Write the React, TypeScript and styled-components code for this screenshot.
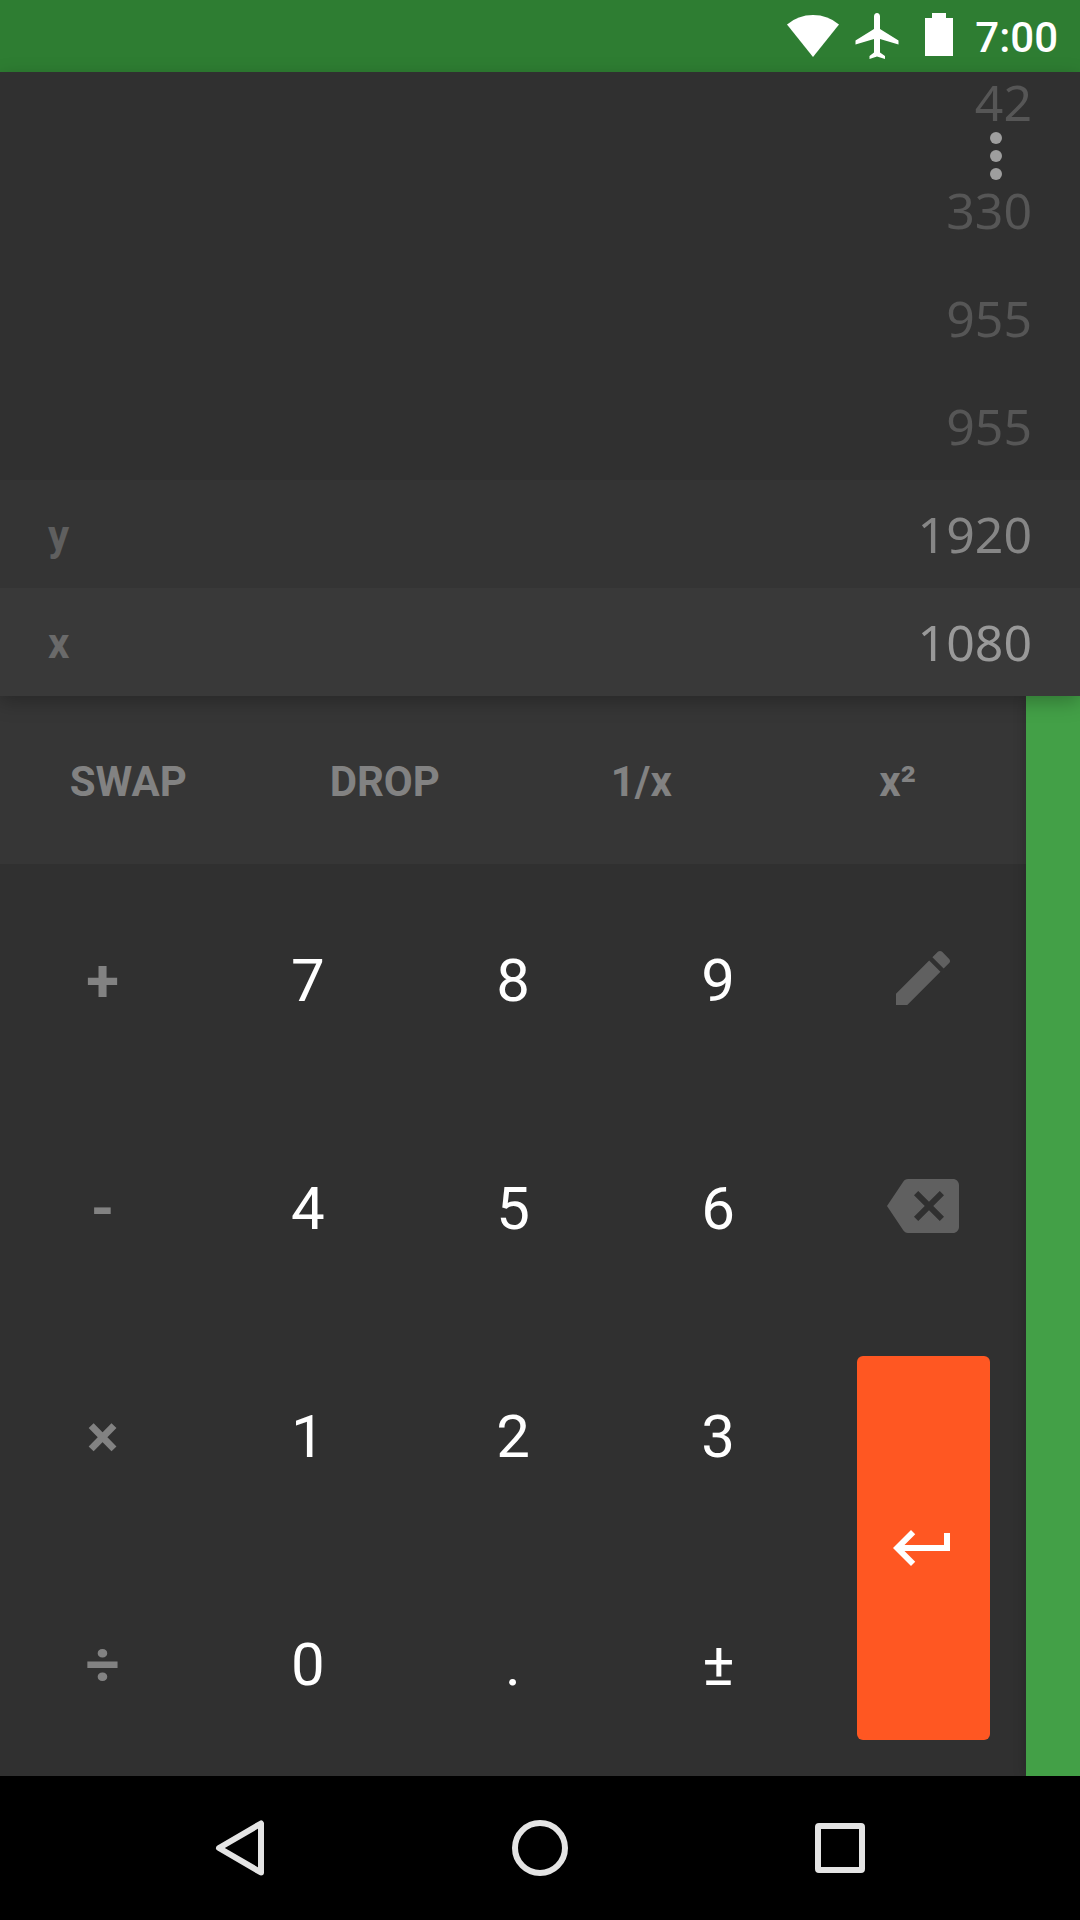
import React from "react";
import styled, { createGlobalStyle } from "styled-components";

const GlobalStyle = createGlobalStyle`
  *, *::before, *::after { box-sizing: border-box; }
  body { margin: 0; background: #303030; }
  button { margin: 0; padding: 0; border: 0; background: none; color: inherit; font: inherit; cursor: pointer; }
`;

const Screen = styled.div`
  display: flex;
  flex-direction: column;
  min-height: 100vh;
  font-family: Roboto, "Noto Sans", sans-serif;
  color: #ffffff;
  background: #303030;
`;

const StatusBar = styled.header`
  display: flex;
  align-items: center;
  justify-content: flex-end;
  height: 72px;
  padding-right: 22px;
  background: #2e7d32;
`;

const StatusIcons = styled.div`
  display: flex;
  gap: 16px;
  margin-right: 12px;
`;

const StatusIcon = styled.svg<{ $width: number }>`
  width: ${(p) => p.$width}px;
  height: 48px;
  fill: #ffffff;
`;

const Clock = styled.time`
  padding-top: 4px;
  font-size: 42px;
  font-weight: 500;
  line-height: 48px;
`;

const Display = styled.section`
  position: relative;
  z-index: 2;
  display: flex;
  flex: 26 1 0;
  background: #303030;
  box-shadow: 0 6px 18px rgba(0, 0, 0, 0.26);
`;

const Stack = styled.dl`
  display: flex;
  flex: 1;
  flex-direction: column;
  margin: 0;
`;

const StackRow = styled.div<{ $background: string }>`
  display: flex;
  flex: none;
  align-items: flex-end;
  justify-content: space-between;
  height: 108px;
  padding: 0 48px 24px;
  background: ${(p) => p.$background};

  &:first-child {
    flex: 1;
    height: auto;
  }
`;

const Register = styled.dt<{ $color: string }>`
  padding-top: 4px;
  font-size: 42px;
  font-weight: 700;
  line-height: 56px;
  color: ${(p) => p.$color};
`;

const Value = styled.dd<{ $color: string }>`
  margin: 0;
  font-family: "Noto Sans", "Open Sans", sans-serif;
  font-size: 50px;
  line-height: 60px;
  color: ${(p) => p.$color};
`;

const MenuButton = styled.button`
  && {
    position: absolute;
    top: 48px;
    right: 48px;
    display: grid;
    color: #9e9e9e;
  }
`;

const Icon = styled.svg`
  display: block;
  width: 72px;
  height: 72px;
  fill: currentColor;
`;

const Body = styled.main`
  display: flex;
  flex: 45 1 0;
`;

const Pad = styled.div`
  display: flex;
  flex: 1;
  flex-direction: column;
`;

const Commands = styled.div`
  display: grid;
  grid-template-columns: repeat(4, 1fr);
  height: 168px;
  background: #363636;
`;

const Command = styled.button`
  && {
    padding-top: 4px;
    font-size: 42px;
    font-weight: 700;
    line-height: 48px;
    color: #828282;
  }
`;

const Keys = styled.div`
  display: grid;
  flex: 1;
  grid-template-columns: repeat(5, 1fr);
  grid-template-rows: repeat(4, 1fr);
`;

const Key = styled.button<{ $operator?: boolean }>`
  && {
    padding-top: 6px;
    font-size: 60px;
    font-weight: ${(p) => (p.$operator ? 700 : 400)};
    line-height: 72px;
    color: ${(p) => (p.$operator ? "#828282" : "#ffffff")};
  }
`;

const IconKey = styled.button`
  && {
    display: grid;
    place-items: center;
    color: #606060;
  }
`;

const EnterKey = styled.button`
  && {
    display: grid;
    grid-row: 3 / span 2;
    grid-column: 5;
    place-items: center;
    margin: 36px;
    border-radius: 6px;
    background: #ff5722;
    color: #ffffff;
  }
`;

const Drawer = styled.aside`
  z-index: 1;
  width: 54px;
  background: #43a047;
  box-shadow: 0 0 12px rgba(0, 0, 0, 0.22);
`;

const NavBar = styled.nav`
  z-index: 3;
  display: grid;
  grid-template-columns: repeat(3, 300px);
  justify-content: center;
  height: 144px;
  background: #000000;
`;

const NavButton = styled.button`
  && {
    display: grid;
    place-items: center;
  }
`;

const NavIcon = styled.svg`
  display: block;
  width: 72px;
  height: 72px;
  fill: none;
  stroke: #e4e4e4;
  stroke-width: 6;
  stroke-linejoin: round;
`;

type Entry = { value: string; color: string; register?: string; registerColor?: string; background: string };

const stack: Entry[] = [
  { value: "42", color: "#565656", background: "#303030" },
  { value: "330", color: "#565656", background: "#303030" },
  { value: "955", color: "#565656", background: "#303030" },
  { value: "955", color: "#565656", background: "#303030" },
  { value: "1920", color: "#868686", register: "y", registerColor: "#5f5f5f", background: "#343434" },
  { value: "1080", color: "#999999", register: "x", registerColor: "#6a6a6a", background: "#393939" },
];

const commands = ["SWAP", "DROP", "1/x", "x²"];

function TextKeys({ labels }: { labels: string[] }) {
  return (
    <>
      {labels.map((label, i) => (
        <Key key={label} type="button" $operator={i === 0}>
          {label}
        </Key>
      ))}
    </>
  );
}

export default function App() {
  return (
    <Screen>
      <GlobalStyle />
      <StatusBar>
        <StatusIcons>
          <StatusIcon $width={52} viewBox="0 0 52 48" aria-label="Wi-Fi">
            <path d="M0 12.500Q11 3 26 3T52 12.500L26 45Z" />
          </StatusIcon>
          <StatusIcon $width={44} viewBox="0 0 44 48" aria-label="Airplane mode">
            <path d="M22 1c1.800 0 3 1.500 3 3.500V17L43.500 28.500V32.500L25 27V40.500L30 44V47L22 44.500L14.500 47V44L19 40.500V27L.5 32.500V28.500L19 17V4.500C19 2.500 20.200 1 22 1Z" />
          </StatusIcon>
          <StatusIcon $width={48} viewBox="0 0 48 48" aria-label="Battery full">
            <path d="M17 1h14v5h7v38H10V6h7Z" />
          </StatusIcon>
        </StatusIcons>
        <Clock>7:00</Clock>
      </StatusBar>

      <Display>
        <Stack>
          {stack.map((entry, i) => (
            <StackRow key={i} $background={entry.background}>
              <Register $color={entry.registerColor ?? "#565656"}>{entry.register}</Register>
              <Value $color={entry.color}>{entry.value}</Value>
            </StackRow>
          ))}
        </Stack>
        <MenuButton type="button" aria-label="More options">
          <Icon viewBox="0 0 24 24">
            <circle cx="12" cy="6" r="2" />
            <circle cx="12" cy="12" r="2" />
            <circle cx="12" cy="18" r="2" />
          </Icon>
        </MenuButton>
      </Display>

      <Body>
        <Pad>
          <Commands>
            {commands.map((label) => (
              <Command key={label} type="button">
                {label}
              </Command>
            ))}
          </Commands>
          <Keys>
            <TextKeys labels={["+", "7", "8", "9"]} />
            <IconKey type="button" aria-label="Edit">
              <Icon viewBox="0 0 24 24">
                <path d="M3 17.250V21h3.750L17.810 9.940l-3.750-3.750L3 17.250zM20.710 7.040c.39-.39.39-1.020 0-1.410l-2.340-2.340c-.39-.39-1.020-.39-1.410 0l-1.830 1.830 3.750 3.750 1.830-1.830z" />
              </Icon>
            </IconKey>
            <TextKeys labels={["-", "4", "5", "6"]} />
            <IconKey type="button" aria-label="Backspace">
              <Icon viewBox="0 0 24 24">
                <path d="M22 3H7c-.69 0-1.230.35-1.590.88L0 12l5.410 8.110c.36.53.9.89 1.590.89h15c1.100 0 2-.9 2-2V5c0-1.100-.9-2-2-2zm-3 12.590L17.590 17 14 13.410 10.410 17 9 15.590 12.590 12 9 8.410 10.410 7 14 10.590 17.590 7 19 8.410 15.410 12 19 15.590z" />
              </Icon>
            </IconKey>
            <TextKeys labels={["×", "1", "2", "3"]} />
            <EnterKey type="button" aria-label="Enter">
              <Icon viewBox="0 0 24 24">
                <path d="M19 7v4H5.830l3.580-3.590L8 6l-6 6 6 6 1.410-1.410L5.830 13H21V7z" />
              </Icon>
            </EnterKey>
            <TextKeys labels={["÷", "0", ".", "±"]} />
          </Keys>
        </Pad>
        <Drawer aria-label="More functions" />
      </Body>

      <NavBar>
        <NavButton type="button" aria-label="Back">
          <NavIcon viewBox="0 0 72 72">
            <path d="M57 11.500V60.500L15 36Z" />
          </NavIcon>
        </NavButton>
        <NavButton type="button" aria-label="Home">
          <NavIcon viewBox="0 0 72 72">
            <circle cx="36" cy="36" r="25" />
          </NavIcon>
        </NavButton>
        <NavButton type="button" aria-label="Recent apps">
          <NavIcon viewBox="0 0 72 72">
            <rect x="14" y="14" width="44" height="44" rx="1" />
          </NavIcon>
        </NavButton>
      </NavBar>
    </Screen>
  );
}
